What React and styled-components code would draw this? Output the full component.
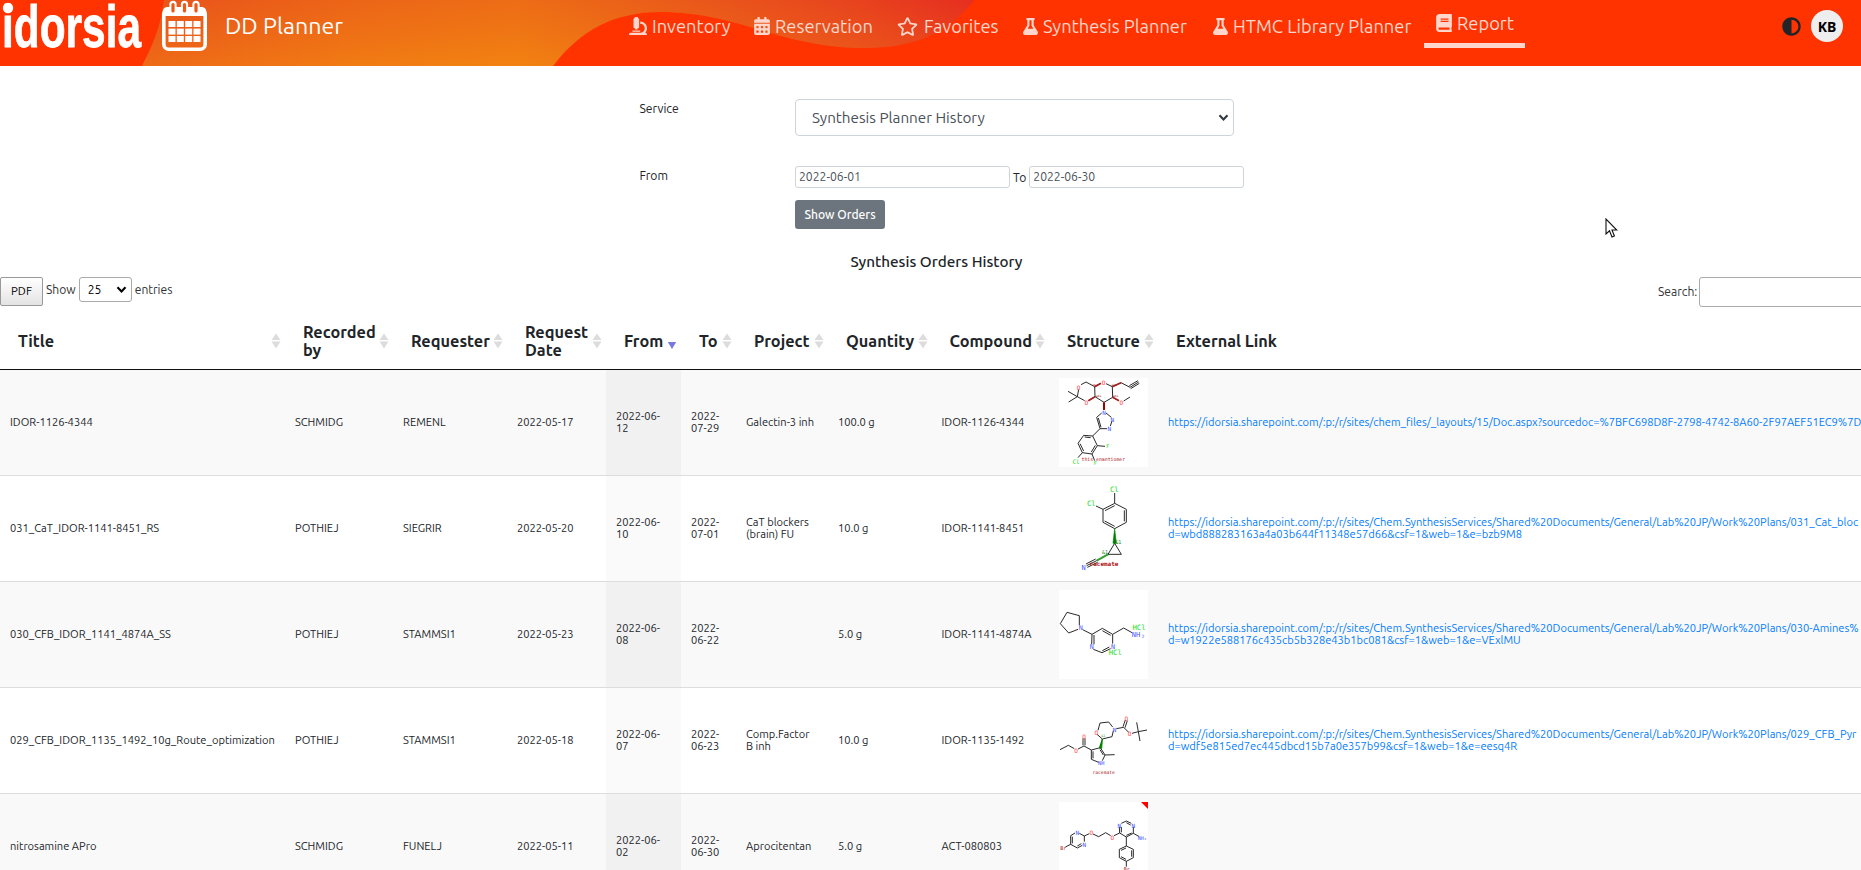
import React from "react";
import styled, { createGlobalStyle } from "styled-components";
import { FaMicroscope, FaCalendarAlt, FaRegStar, FaFlask, FaBook, FaAdjust } from "react-icons/fa";

const Global = createGlobalStyle`
  * { box-sizing: border-box; }
  html, body { margin: 0; height: 100%; overflow: hidden; }
  body {
    background: #fff;
    color: #212529;
    font-family: Ubuntu, "Noto Sans", "Open Sans", sans-serif;
    font-size: 12px;
  }
`;

const Page = styled.div`
  position: relative;
  width: 1861px;
  height: 870px;
  overflow: hidden;
`;

const Header = styled.header`
  position: relative;
  display: flex;
  height: 66px;
  background: #ff3300;
`;

const HeaderWave = styled.svg`
  position: absolute;
  inset: 0;
  width: 1000px;
  height: 66px;
`;

const Brand = styled.div`
  position: relative;
  display: flex;
  align-items: flex-start;
  width: 629px;
  color: #fff;
`;

const Logo = styled.svg`
  width: 162px;
  height: 52px;
  overflow: visible;
`;

const BrandCalendar = styled.svg`
  width: 45px;
  height: 52px;
`;

const AppName = styled.span`
  margin: 10px 0 0 18px;
  font-size: 23.2px;
  line-height: 30px;
  white-space: nowrap;
`;

const Nav = styled.nav`
  position: relative;
  display: flex;
  flex: 1;
  align-items: flex-start;
`;

const NavItem = styled.a`
  display: flex;
  align-items: center;
  flex: none;
  gap: ${(p) => p.$gap}px;
  width: ${(p) => p.$w}px;
  height: ${(p) => (p.$active ? 48 : 52)}px;
  padding: ${(p) => (p.$active ? "3px 0 0 11px" : "0")};
  border-bottom: ${(p) => (p.$active ? "5px solid #ffd6cc" : "0")};
  color: #ffd6cc;
  font-size: 18.3px;
  white-space: nowrap;
  svg { flex: none; }
`;

const UserArea = styled.div`
  position: relative;
  display: flex;
  align-items: center;
  gap: 10px;
  height: 52px;
  padding-right: 18px;
  color: #212529;
`;

const Avatar = styled.span`
  display: flex;
  align-items: center;
  justify-content: center;
  width: 32px;
  height: 32px;
  border-radius: 50%;
  background: #eee;
  color: #000;
  font: 700 14px "Noto Sans", sans-serif;
`;

const Form = styled.form`
  display: grid;
  grid-template-columns: 156px 460px;
  margin-left: 639px;
  padding-top: 33px;
`;

const Label = styled.label`
  padding-left: 0.5px;
  font-size: 12.16px;
  line-height: 19px;
`;

const ServiceSelect = styled.div`
  display: flex;
  align-items: center;
  justify-content: space-between;
  width: 439px;
  height: 37px;
  margin-bottom: 30px;
  padding: 0 4px 0 16px;
  border: 1px solid #ced4da;
  border-radius: 4px;
  color: #495057;
  font-size: 15.25px;
`;

const Range = styled.div`
  display: flex;
  align-items: center;
  gap: 3px;
  height: 22px;
  font-size: 12.16px;
`;

const DateInput = styled.span`
  width: 215px;
  height: 22px;
  padding-left: 3px;
  border: 1px solid #ced4da;
  border-radius: 3px;
  color: #495057;
  line-height: 20px;
`;

const ShowButton = styled.button`
  grid-column: 2;
  width: 90px;
  height: 29px;
  margin-top: 12px;
  padding: 0 0 1px;
  border: 0;
  border-radius: 3px;
  background: #6c757d;
  color: #fff;
  font: 500 12.1px Ubuntu, "Noto Sans", sans-serif;
`;

const Heading = styled.h2`
  width: 1873px;
  margin: 22px 0 0;
  font-size: 15.25px;
  font-weight: 500;
  line-height: 22px;
  text-align: center;
`;

const Toolbar = styled.div`
  display: flex;
  justify-content: space-between;
  width: 1920px;
  height: 36px;
  margin-top: 4px;
  color: #333;
  font-size: 12.1px;
`;

const ToolGroup = styled.div`
  display: flex;
  align-items: flex-start;
  width: ${(p) => p.$w};
  line-height: ${(p) => p.$lh}px;
`;

const PdfButton = styled.button`
  width: 43px;
  height: 29px;
  margin-right: 3px;
  padding: 0 0 2px;
  border: 1px solid #999;
  border-radius: 2px;
  background: linear-gradient(#fff, #e3e3e3);
  color: #000;
  font: 11.4px Ubuntu, "Noto Sans", sans-serif;
`;

const LengthSelect = styled.span`
  display: flex;
  align-items: center;
  justify-content: space-between;
  width: 53px;
  height: 25px;
  margin: 0 3px;
  padding: 0 4px 0 8px;
  border: 1px solid #aaa;
  border-radius: 3px;
  color: #000;
`;

const SearchInput = styled.span`
  width: 220px;
  height: 30px;
  margin-left: 2px;
  border: 1px solid #aaa;
  border-radius: 3px;
`;

const Table = styled.table`
  width: 2158px;
  table-layout: fixed;
  border-collapse: separate;
  border-spacing: 0;
`;

const Th = styled.th`
  height: 57px;
  padding: 0 4px 0 18px;
  border-bottom: 1px solid #111;
  text-align: left;
  font-size: 16.3px;
  font-weight: 700;
  line-height: 18px;
`;

const HeadInner = styled.div`
  display: flex;
  align-items: center;
  justify-content: space-between;
`;

const SortIcon = styled.svg`
  flex: none;
  width: 10px;
  height: 16px;
  margin: 0 0 1px -6px;
`;

const Row = styled.tr`
  height: ${(p) => (p.$first ? 105 : 106)}px;
  background: ${(p) => (p.$odd ? "#f9f9f9" : "#fff")};
`;

const Td = styled.td`
  padding: 0 0 ${(p) => (p.$image ? 0 : 2)}px 10px;
  border-top: ${(p) => (p.$first ? "0" : "1px solid #ddd")};
  background: ${(p) => (p.$sorted ? (p.$odd ? "#f1f1f1" : "#fafafa") : "transparent")};
  font-size: 11.1px;
  line-height: 12px;
  white-space: pre;
  vertical-align: middle;
`;

const Link = styled.a`
  display: block;
  color: #007bff;
`;

const Molecule = styled.svg`
  display: block;
  width: 89px;
  height: 89px;
  background: #fff;
`;

const Pointer = styled.svg`
  position: absolute;
  left: 1605px;
  top: 218px;
  width: 13px;
  height: 21px;
`;

const Chevron = ({ color = "#343a40", size = 11 }) => (
  <svg width={size} height={size} viewBox="0 0 11 11">
    <path d="M1.5 3.2 L5.5 7.4 L9.5 3.2" fill="none" stroke={color} strokeWidth="2.1" />
  </svg>
);

const Sort = ({ desc }) => (
  <SortIcon viewBox="0 0 10 16">
    {!desc && <path d="M5 0.5 L9.5 7 H0.5 Z" fill="#dcdcdc" />}
    <path d={desc ? "M0.8 9 H9.2 L5 16 Z" : "M0.5 8.6 H9.5 L5 15.5 Z"} fill={desc ? "#7878e0" : "#dcdcdc"} />
  </SortIcon>
);

const Bonds = ({ d, c = "#222", w = 2.9, fill = "none" }) => (
  <path d={d} stroke={c} strokeWidth={w} fill={fill} />
);

const Atom = ({ x, y, c = "#ff4444", s = 18, bold, children }) => (
  <text x={x} y={y} fill={c} fontSize={s} fontFamily="DejaVu Sans Mono, monospace" fontWeight={bold ? 700 : 400} textAnchor="middle" dominantBaseline="central">
    {children}
  </text>
);

const BLUE = "#4455ff";
const GREEN = "#22dd22";
const DARKRED = "#aa2020";

const Mol1 = () => (
  <Molecule viewBox="27 24 267 267">
    <Bonds d="M93 44 L108 36 L134 50 L135 80 L115 92 M104 92 L82 80 L86 58 M82 80 L54 64 M82 80 L56 96 M134 50 L153 40 M168 41 L187 50 L188 82 L162 97 L135 80 M187 50 L213 38 L240 52 L266 36 M238 47 L264 32 M242 56 L268 40 M188 82 L207 92 M221 93 L240 81" />
    <Bonds d="M134 50 L153 40 M135 80 L115 92 M187 50 L213 38 M188 82 L207 92" c={DARKRED} w={5} />
    <Bonds d="M162 97 V120" c="#a00000" w={6} />
    <Bonds d="M155 129 L140 142 L150 176 L171 176 M145 144 L153 172 M168 129 L184 142 M186 153 L181 168 M150 176 L128 198 L101 196 L84 220 L97 248 L126 252 L142 227 L128 198 M122 203 L104 201 M90 221 L101 243 M124 246 L136 226 M142 227 L165 229 M97 248 L84 263 M126 252 L134 272" />
    <Atom x={86} y={51}>O</Atom><Atom x={161} y={37}>O</Atom><Atom x={109} y={97}>O</Atom><Atom x={214} y={97}>O</Atom>
    <Atom x={162} y={126} c={BLUE}>N</Atom><Atom x={187} y={147} c={BLUE}>N</Atom><Atom x={178} y={175} c={BLUE}>N</Atom>
    <Atom x={173} y={229} c={GREEN} s={15}>F</Atom><Atom x={136} y={278} c={GREEN} s={15}>F</Atom><Atom x={78} y={273} c={GREEN}>Cl</Atom>
    <Atom x={134} y={45} c={DARKRED} s={9}>abs</Atom><Atom x={146} y={79} c={DARKRED} s={9}>abs</Atom><Atom x={193} y={44} c={DARKRED} s={9}>abs</Atom><Atom x={197} y={78} c={DARKRED} s={9}>abs</Atom>
    <Atom x={160} y={269} c={DARKRED} s={14.5}>this enantiomer</Atom>
  </Molecule>
);

const Mol2 = () => (
  <Molecule viewBox="27 27 267 267">
    <Bonds d="M194 54 V85 L229 103 V142 L194 161 L159 142 V103 L194 85 M138 93 L159 103 M194 92 L165 107 M223 106 V139 M194 154 L164 138 M194 205 L174 238 H214 Z" />
    <Bonds d="M194 161 L189 205 H199 Z" c="#008000" w={2} fill="#008000" />
    <Bonds d="M174 238 L140 257" c="#30a030" w={6} />
    <Bonds d="M140 257 L110 272 M137 252 L108 267 M143 262 L112 277" />
    <Atom x={193} y={44} c={GREEN} s={22}>Cl</Atom><Atom x={124} y={85} c={GREEN} s={22}>Cl</Atom>
    <Atom x={205} y={201} c="#208020" s={15}>&amp;1</Atom><Atom x={165} y={231} c="#208020" s={15}>&amp;1</Atom>
    <Atom x={162} y={265} c="#b01010" s={18} bold>racemate</Atom>
    <Atom x={101} y={278} c={BLUE} s={21}>N</Atom>
  </Molecule>
);

const Mol3 = () => (
  <Molecule viewBox="27 15 267 267">
    <Bonds d="M88 121 L88 92 L51 82 L31 116 L56 144 L84 133 M98 134 L126 148 L157 130 L188 148 V176 M157 137 L182 151 M126 148 L125 178 M132 150 V178 M130 193 L156 203 L182 191 M157 197 L178 186 M188 148 L221 129 L246 143" />
    <Atom x={92} y={129} c={BLUE} s={20}>N</Atom><Atom x={125} y={187} c={BLUE} s={20}>N</Atom><Atom x={189} y={186} c={BLUE} s={20}>N</Atom>
    <Atom x={258} y={149} c={BLUE} s={21}>NH</Atom><Atom x={279} y={155} c={BLUE} s={13}>2</Atom>
    <Atom x={267} y={128} c={GREEN} s={22}>HCl</Atom><Atom x={196} y={203} c={GREEN} s={22}>HCl</Atom>
  </Molecule>
);

const Mol4 = () => (
  <Molecule viewBox="27 18 267 267">
    <Bonds d="M30 179 L55 166 L73 176 M84 177 L102 168 L124 180 V208 L146 217 M99 166 V145 M105 166 V145 M124 180 L151 173 L165 195 L157 212 M129 184 V205 M150 179 L160 195 M165 195 L194 194 M157 147 L141 133 M144 121 L150 99 L176 96 L188 111 M190 122 L186 140 L157 147 M199 116 L221 112 L236 127 M219 110 L226 90 M225 113 L232 92 M246 130 L265 125 L260 97 M265 125 L291 120 M265 125 L270 153" />
    <Bonds d="M157 147 L148 174 L155 175 Z" c="#008000" w={3} fill="#008000" />
    <Atom x={78} y={180}>O</Atom><Atom x={102} y={138}>O</Atom><Atom x={139} y={127}>O</Atom><Atom x={229} y={85}>O</Atom><Atom x={239} y={131}>O</Atom>
    <Atom x={194} y={117} c={BLUE}>N</Atom><Atom x={154} y={218} c={BLUE} s={16}>NH</Atom><Atom x={160} y={139} c="#30a030" s={10}>&amp;1</Atom>
    <Atom x={161} y={246} c={DARKRED} s={14}>racemate</Atom>
  </Molecule>
);

const Mol5 = () => (
  <Molecule viewBox="27 336 267 267">
    <path d="M273 336 H294 V357 Z" fill="#f00" />
    <Bonds d="M75 429 L62 437 V463 L82 474 L97 466 M103 455 V438 L88 430 M67 440 V460 M82 468 L94 461 M103 438 L118 431 M62 463 L46 471 M129 432 L146 440 L167 428 L182 437 M192 437 L209 429 L208 411 M214 400 L229 393 L244 400 M250 411 V430 L229 441 L209 429 M229 398 L242 405 M245 429 L229 436 M214 427 V411 M250 430 L268 440 M229 441 V468 L250 478 V503 L229 514 L208 503 V478 L229 468 M245 481 V500 M228 508 L213 500 M213 481 L228 474 M229 514 V530" />
    <Atom x={82} y={428} c={BLUE}>N</Atom><Atom x={103} y={463} c={BLUE}>N</Atom><Atom x={40} y={475} c={DARKRED} s={15}>Br</Atom>
    <Atom x={124} y={428}>O</Atom><Atom x={187} y={441}>O</Atom><Atom x={208} y={405} c={BLUE}>N</Atom><Atom x={250} y={405} c={BLUE}>N</Atom>
    <Atom x={277} y={443} c={BLUE} s={15}>NH₂</Atom><Atom x={230} y={537} c={DARKRED} s={15}>Br</Atom>
  </Molecule>
);

const SITE = "https://idorsia.sharepoint.com/:p:/r/sites/";
const DOCS = SITE + "Chem.SynthesisServices/Shared%20Documents/General/Lab%20JP/Work%20Plans/";

const rows = [
  ["IDOR-1126-4344", "SCHMIDG", "REMENL", "2022-05-17", "2022-06-\n12", "2022-\n07-29", "Galectin-3 inh", "100.0 g", "IDOR-1126-4344", Mol1, [SITE + "chem_files/_layouts/15/Doc.aspx?sourcedoc=%7BFC698D8F-2798-4742-8A60-2F97AEF51EC9%7D"]],
  ["031_CaT_IDOR-1141-8451_RS", "POTHIEJ", "SIEGRIR", "2022-05-20", "2022-06-\n10", "2022-\n07-01", "CaT blockers\n(brain) FU", "10.0 g", "IDOR-1141-8451", Mol2, [DOCS + "031_Cat_bloc", "d=wbd888283163a4a03b644f11348e57d66&csf=1&web=1&e=bzb9M8"]],
  ["030_CFB_IDOR_1141_4874A_SS", "POTHIEJ", "STAMMSI1", "2022-05-23", "2022-06-\n08", "2022-\n06-22", "", "5.0 g", "IDOR-1141-4874A", Mol3, [DOCS + "030-Amines%", "d=w1922e588176c435cb5b328e43b1bc081&csf=1&web=1&e=VExlMU"]],
  ["029_CFB_IDOR_1135_1492_10g_Route_optimization", "POTHIEJ", "STAMMSI1", "2022-05-18", "2022-06-\n07", "2022-\n06-23", "Comp.Factor\nB inh", "10.0 g", "IDOR-1135-1492", Mol4, [DOCS + "029_CFB_Pyr", "d=wdf5e815ed7ec445dbcd15b7a0e357b99&csf=1&web=1&e=eesq4R"]],
  ["nitrosamine APro", "SCHMIDG", "FUNELJ", "2022-05-11", "2022-06-\n02", "2022-\n06-30", "Aprocitentan", "5.0 g", "ACT-080803", Mol5, []],
];

const columns = [
  ["Title", 285], ["Recorded by", 108], ["Requester", 114], ["Request Date", 99], ["From", 75], ["To", 55],
  ["Project", 92], ["Quantity", 103.5], ["Compound", 117.5], ["Structure", 109], ["External Link", 1000],
];

const navItems = [
  { icon: <FaMicroscope size={18} />, text: "Inventory", w: 124, gap: 5 },
  { icon: <FaCalendarAlt size={18} />, text: "Reservation", w: 144, gap: 4 },
  { icon: <FaRegStar size={21} />, text: "Favorites", w: 125, gap: 6 },
  { icon: <FaFlask size={17} />, text: "Synthesis Planner", w: 190, gap: 4 },
  { icon: <FaFlask size={17} />, text: "HTMC Library Planner", w: 212, gap: 4 },
  { icon: <FaBook size={18} />, text: "Report", w: 101, gap: 4, active: true },
];

export default function App() {
  return (
    <Page>
      <Global />
      <Header>
        <HeaderWave viewBox="0 0 1000 66">
          <defs>
            <linearGradient id="warm" gradientUnits="userSpaceOnUse" x1="140" y1="0" x2="975" y2="0">
              <stop offset="0" stopColor="#e9531b" />
              <stop offset="0.25" stopColor="#ee7015" />
              <stop offset="0.45" stopColor="#f07c12" />
              <stop offset="0.6" stopColor="#ec6717" />
              <stop offset="0.85" stopColor="#e73d1f" />
              <stop offset="1" stopColor="#e51c22" />
            </linearGradient>
            <linearGradient id="glow" gradientUnits="userSpaceOnUse" x1="0" y1="0" x2="0" y2="66">
              <stop offset="0" stopColor="#e8501c" stopOpacity="0.35" />
              <stop offset="1" stopColor="#f58c10" stopOpacity="0.4" />
            </linearGradient>
          </defs>
          {["url(#warm)", "url(#glow)"].map((fill) => (
            <path key={fill} fill={fill} d="M142 66 C150 50 160 32 164 0 H974 C955 25 925 48 865 48 C780 48 740 12 660 12 C615 12 580 30 553 66 Z" />
          ))}
        </HeaderWave>
        <Brand>
          <Logo viewBox="0 0 162 52">
            <circle cx="8" cy="8" r="5.2" fill="#fff" />
            <text x="2" y="47" fill="#fff" stroke="#fff" strokeWidth="0.8" fontFamily="Liberation Sans, sans-serif" fontSize="60" fontWeight="700" textLength="139" lengthAdjust="spacingAndGlyphs">idorsia</text>
          </Logo>
          <BrandCalendar viewBox="0 0 45 52">
            <rect x="1.8" y="8.8" width="41.4" height="40.4" rx="5" fill="none" stroke="#fff" strokeWidth="3.6" />
            <path d="M1 16 V10 Q2 7 6 7 H39 Q43 7 44 10 V16 Z" fill="#fff" />
            {[11, 22.5, 34].map((x) => (
              <g key={x}>
                <rect x={x - 3.6} y="0.7" width="7.2" height="14" rx="3.6" fill="#fff" />
                <rect x={x - 1.6} y="3" width="3.2" height="9.6" rx="1.6" fill="#ea5a18" />
              </g>
            ))}
            {[21, 28.6, 36].map((y) => [6.5, 14.8, 23.2, 31.5].map((x) => (
              <rect key={`${x}-${y}`} x={x} y={y} width="7" height="6" fill="#fff" />
            )))}
          </BrandCalendar>
          <AppName>DD Planner</AppName>
        </Brand>
        <Nav>
          {navItems.map((n) => (
            <NavItem key={n.text} $w={n.w} $gap={n.gap} $active={n.active}>
              {n.icon}<span>{n.text}</span>
            </NavItem>
          ))}
        </Nav>
        <UserArea>
          <FaAdjust size={19} />
          <Avatar>KB</Avatar>
        </UserArea>
      </Header>

      <Form>
        <Label>Service</Label>
        <ServiceSelect><span>Synthesis Planner History</span><Chevron /></ServiceSelect>
        <Label>From</Label>
        <Range><DateInput>2022-06-01</DateInput><span>To</span><DateInput>2022-06-30</DateInput></Range>
        <ShowButton type="button">Show Orders</ShowButton>
      </Form>

      <Heading>Synthesis Orders History</Heading>

      <Toolbar>
        <ToolGroup $lh={26}>
          <PdfButton>PDF</PdfButton>
          <span>Show</span>
          <LengthSelect>25<Chevron color="#000" /></LengthSelect>
          <span>entries</span>
        </ToolGroup>
        <ToolGroup $w="262px" $lh={29}>
          <span>Search:</span>
          <SearchInput />
        </ToolGroup>
      </Toolbar>

      <Table>
        <colgroup>{columns.map(([name, w]) => <col key={name} style={{ width: w }} />)}</colgroup>
        <thead>
          <tr>
            {columns.map(([name], i) => (
              <Th key={name}>
                <HeadInner><span>{name}</span>{i < 10 && <Sort desc={i === 4} />}</HeadInner>
              </Th>
            ))}
          </tr>
        </thead>
        <tbody>
          {rows.map((r, ri) => (
            <Row key={r[0]} $first={ri === 0} $odd={ri % 2 === 0}>
              {r.map((cell, ci) => {
                const Drawing = ci === 9 ? cell : null;
                return (
                  <Td key={ci} $first={ri === 0} $sorted={ci === 4} $odd={ri % 2 === 0} $image={ci === 9}>
                    {Drawing ? <Drawing /> : ci === 10 ? cell.map((line) => <Link key={line}>{line}</Link>) : cell}
                  </Td>
                );
              })}
            </Row>
          ))}
        </tbody>
      </Table>

      <Pointer viewBox="0 0 13 21">
        <path d="M1 1 V16 L4.5 12.8 L7 19 L9.4 18 L7 12 H11.8 Z" fill="#fff" stroke="#111" strokeWidth="1.1" />
      </Pointer>
    </Page>
  );
}
